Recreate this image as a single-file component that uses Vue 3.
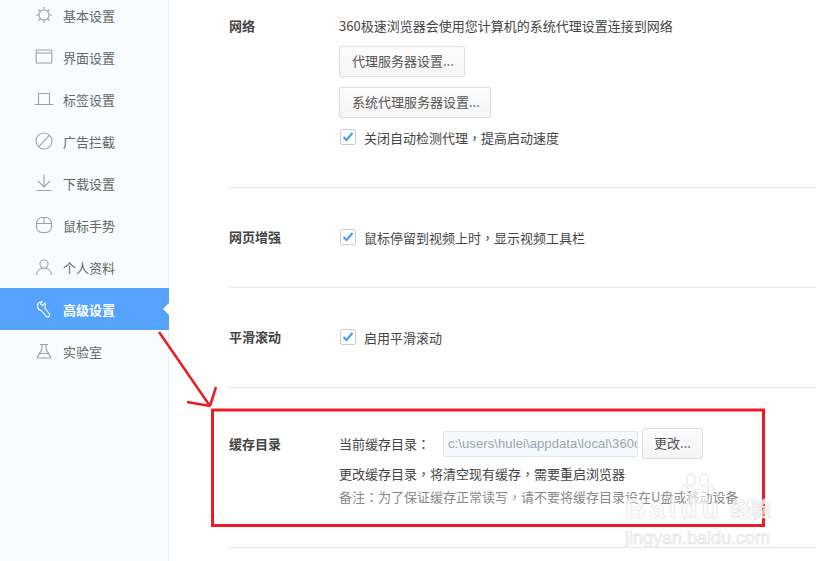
<script setup>
const navItems = [
  { label: '基本设置', icon: 'sun' },
  { label: '界面设置', icon: 'window' },
  { label: '标签设置', icon: 'tab' },
  { label: '广告拦截', icon: 'ban' },
  { label: '下载设置', icon: 'down' },
  { label: '鼠标手势', icon: 'mouse' },
  { label: '个人资料', icon: 'user' },
  { label: '高级设置', icon: 'wrench', active: true },
  { label: '实验室', icon: 'flask' }
]
const icons = {
  sun: 'M10 5a5 5 0 1 0 0 10a5 5 0 1 0 0-10M10 2v3M10 15v3M2 10h3M15 10h3M4.300 4.300l2.200 2.200M13.500 13.500l2.200 2.200M15.700 4.300l-2.200 2.200M6.500 13.500l-2.200 2.200',
  window: 'M3 3h14a.8.8 0 0 1 .8.8v11.400a.8.8 0 0 1-.8.8h-14a.8.8 0 0 1-.8-.8v-11.400a.8.8 0 0 1 .8-.8zM2.200 6h15.600',
  tab: 'M1 15.500h18M4.500 15.500v-11h11v11',
  ban: 'M10 2a8 8 0 1 0 0 16a8 8 0 1 0 0-16M4.500 15.800L15.500 4.200',
  down: 'M10 1.500v12.500M4 8l6 6l6-6M2.500 17.500h15',
  mouse: 'M8 2.500h4a5.500 5.500 0 0 1 5.500 5.500v4a5.500 5.500 0 0 1-5.500 5.500h-4a5.500 5.500 0 0 1-5.500-5.500v-4a5.500 5.500 0 0 1 5.500-5.500zM2.500 8.500h15M10 2.500v6',
  user: 'M10 3a4 4 0 1 0 0 8a4 4 0 1 0 0-8M2.500 18c.5-4 3.500-7 7.500-7s7 3 7.500 7',
  wrench: 'M8 2.800C5 2.500 3 5 3.500 8C4 10 5.500 11 7 11.200L12.500 17.500C13.800 18.800 16.500 17 15.500 15L10.800 9C11.500 7 11.500 5.500 11 4L8.500 6.500L6.500 5Z',
  flask: 'M6 3.500h8M8 3.500v4.500L3.500 16a.7.7 0 0 0 .6 1h11.800a.7.7 0 0 0 .6-1L12 8v-4.500M6 12.500h8'
}
</script>

<template>
  <div class="page">
    <aside class="sidebar">
      <div v-for="item in navItems" :key="item.label" class="nav-item" :class="{ active: item.active }">
        <svg class="nav-icon" width="20" height="20" viewBox="0 0 20 20" fill="none">
          <path :d="icons[item.icon]" stroke="currentColor" stroke-width="1.100" />
        </svg>
        <span>{{ item.label }}</span>
      </div>
    </aside>

    <main class="main">
      <section class="section network">
        <h3 class="label">网络</h3>
        <div class="body">
          <p class="line">360极速浏览器会使用您计算机的系统代理设置连接到网络</p>
          <button class="btn proxy">代理服务器设置...</button>
          <button class="btn proxy">系统代理服务器设置...</button>
          <label class="check">
            <span class="box"><svg width="12" height="10" viewBox="0 0 12 10" fill="none"><path d="M1.500 5l3 3l6-7" stroke="#3f9bf5" stroke-width="2" /></svg></span>
            <span>关闭自动检测代理<span class="punct">，</span>提高启动速度</span>
          </label>
        </div>
      </section>

      <section class="section short">
        <h3 class="label">网页增强</h3>
        <div class="body">
          <label class="check">
            <span class="box"><svg width="12" height="10" viewBox="0 0 12 10" fill="none"><path d="M1.500 5l3 3l6-7" stroke="#3f9bf5" stroke-width="2" /></svg></span>
            <span>鼠标停留到视频上时<span class="punct">，</span>显示视频工具栏</span>
          </label>
        </div>
      </section>

      <section class="section short">
        <h3 class="label">平滑滚动</h3>
        <div class="body">
          <label class="check">
            <span class="box"><svg width="12" height="10" viewBox="0 0 12 10" fill="none"><path d="M1.500 5l3 3l6-7" stroke="#3f9bf5" stroke-width="2" /></svg></span>
            <span>启用平滑滚动</span>
          </label>
        </div>
      </section>

      <section class="section cache">
        <h3 class="label">缓存目录</h3>
        <div class="body">
          <div class="dir-row">
            <span class="dir-label">当前缓存目录<span class="punct">：</span></span>
            <span class="dir-input">c:\users\hulei\appdata\local\360c</span>
            <button class="btn change">更改...</button>
          </div>
          <p class="line tip">更改缓存目录<span class="punct">，</span>将清空现有缓存<span class="punct">，</span>需要重启浏览器</p>
          <p class="line note">备注<span class="punct">：</span>为了保证缓存正常读写<span class="punct">，</span>请不要将缓存目录设在U盘或移动设备</p>
        </div>
      </section>
    </main>

    <svg class="annotation" width="816" height="561" viewBox="0 0 816 561" fill="none">
      <rect x="212.500" y="410" width="551" height="115.500" stroke="#ed1c24" stroke-width="3" />
      <path d="M159 332L210 406M187 402L210 406M216 387L210 406" stroke="#ed1c24" stroke-width="2.500" />
    </svg>

    <div class="watermark">
      <svg class="paw" width="34" height="38" viewBox="0 0 34 38">
        <ellipse cx="10" cy="8" rx="4" ry="6.500" />
        <ellipse cx="23" cy="8" rx="4" ry="6.500" />
        <ellipse cx="30" cy="18" rx="3" ry="5" />
        <ellipse cx="4" cy="18" rx="3" ry="5" />
        <path d="M17 17c-6 0-10 6-10 10c0 5 6 4 10 4s10 1 10-4c0-4-4-10-10-10z" />
      </svg>
      <div class="wm-main"><span class="wm-bai">Bai</span><span class="wm-du">du</span><span class="wm-cn">经验</span></div>
      <div class="wm-url">jingyan.baidu.com</div>
    </div>
  </div>
</template>

<style>
html, body { margin: 0; overflow: hidden; background: #fff; }
</style>

<style scoped>
.page {
  position: relative;
  display: flex;
  width: 816px;
  height: 561px;
  overflow: hidden;
  background: #fff;
  font-family: "Noto Sans CJK SC", "Liberation Sans", sans-serif;
  font-size: 13px;
  color: #444;
}
.punct { font-family: "Noto Sans CJK TC", sans-serif; }
.sidebar {
  box-sizing: border-box;
  flex: none;
  width: 169px;
  height: 561px;
  background: #f8fbff;
  border-right: 1px solid #e6ecf2;
}
.nav-item {
  position: relative;
  top: -6px;
  display: flex;
  align-items: center;
  height: 42px;
  padding-left: 34px;
  color: #666;
}
.nav-icon { flex: none; margin-right: 9px; color: #a0a0a0; }
.nav-item.active {
  margin-right: -1px;
  background: #55a3ff;
  color: #fff;
  font-weight: 700;
}
.nav-item.active .nav-icon { color: #fff; }
.nav-item.active::after {
  content: "";
  position: absolute;
  right: 0;
  top: 15px;
  border: 6px solid transparent;
  border-right-color: #fff;
  border-left-width: 0;
}
.main {
  flex: 1;
  min-width: 0;
  padding-left: 60px;
}
.section {
  display: flex;
  box-sizing: border-box;
  border-bottom: 1px solid #e8e8e8;
}
.network { height: 188px; padding-top: 17px; }
.short { height: 100px; padding-top: 40px; }
.cache { height: 160px; padding-top: 47px; }
.label {
  flex: none;
  width: 110px;
  margin: 0;
  font-size: 13px;
  font-weight: 700;
  line-height: 18px;
  color: #444;
}
.body { flex: 1; min-width: 0; }
.line { margin: 0; line-height: 18px; }
.btn {
  box-sizing: border-box;
  display: block;
  height: 31px;
  padding: 0 10px 2px 12px;
  border: 1px solid #ddd;
  border-radius: 2px;
  background: linear-gradient(#fcfcfc, #f5f5f5);
  font: inherit;
  color: #555;
}
.proxy { margin-bottom: 10px; }
.proxy:first-of-type { margin-top: 11px; }
.check {
  display: flex;
  align-items: center;
  height: 20px;
  line-height: 18px;
  color: #444;
}
.box {
  box-sizing: border-box;
  display: flex;
  align-items: center;
  justify-content: center;
  flex: none;
  width: 16px;
  height: 16px;
  margin: -2px 8px 0 1px;
  border: 1px solid #ccc;
  border-radius: 2px;
  background: #fff;
}
.dir-row {
  display: flex;
  align-items: center;
  height: 31px;
  margin-top: -7px;
  line-height: 18px;
}
.dir-label { width: 104px; flex: none; }
.dir-input {
  box-sizing: border-box;
  flex: none;
  width: 195px;
  height: 26px;
  padding: 0 4px;
  overflow: hidden;
  border: 1px solid #e0e9f3;
  border-radius: 2px;
  background: #f5f9fd;
  font-family: "Liberation Sans", sans-serif;
  font-size: 13px;
  letter-spacing: .1px;
  line-height: 24px;
  white-space: nowrap;
  color: #9aa5b0;
}
.change { width: 61px; margin-left: 4px; padding: 0 0 2px; }
.tip { margin-top: 6px; }
.note { margin-top: 5px; color: #888; }
.annotation { position: absolute; left: 0; top: 0; pointer-events: none; }
.watermark {
  position: absolute;
  left: 625px;
  top: 496px;
  width: 150px;
  pointer-events: none;
  color: rgba(255, 255, 255, 0.8);
  -webkit-text-stroke: .7px #e2e2e2;
  font-family: "Liberation Sans", sans-serif;
}
.paw { position: absolute; left: 56px; top: -24px; fill: rgba(255,255,255,.6); stroke: #e2e2e2; stroke-width: 1; }
.wm-main { display: flex; align-items: center; position: relative; height: 26px; font-size: 28px; font-weight: 700; letter-spacing: 4px; line-height: 26px; }
.wm-du { margin-right: 8px; }
.wm-cn { font-family: "Noto Sans CJK SC", sans-serif; font-size: 20px; letter-spacing: 0; }
.wm-url { position: relative; margin-top: 4px; font-size: 18px; line-height: 24px; white-space: nowrap; }
</style>
